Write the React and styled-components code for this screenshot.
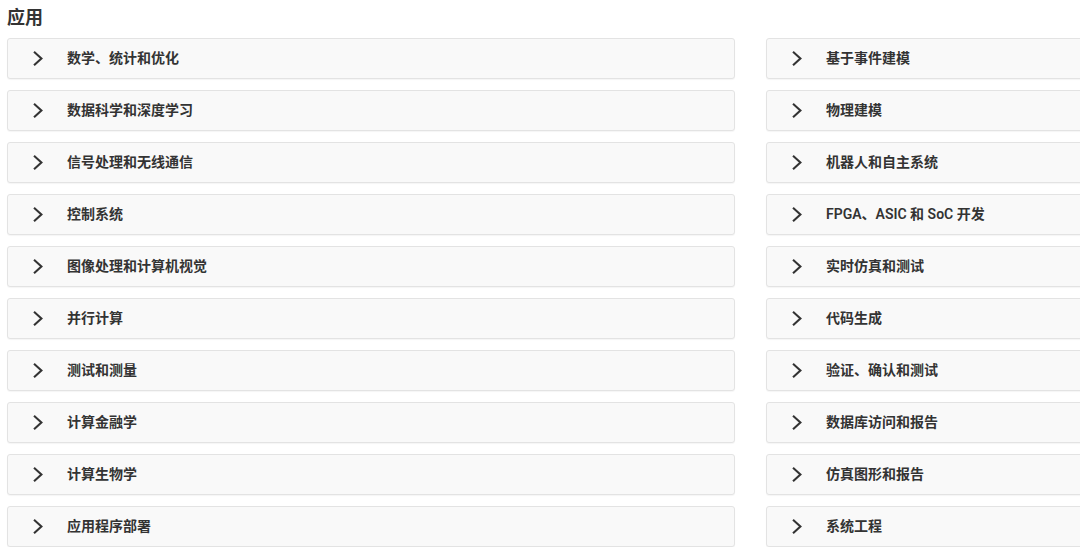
import React from "react";
import styled, { createGlobalStyle } from "styled-components";

const Global = createGlobalStyle`
  html, body { margin: 0; padding: 0; background: #fff; }
  body { font-family: Roboto, "Noto Sans CJK SC", sans-serif; overflow: hidden; }
  #root { width: 1080px; overflow: hidden; }
`;

const Page = styled.div`
  padding: 6px 0 0 7px;
  width: 1600px;
`;

const Title = styled.h2`
  margin: 0 0 9px 0;
  font-size: 18px;
  line-height: 23px;
  font-weight: 700;
  color: #333;
`;

const Grid = styled.div`
  display: grid;
  grid-template-columns: 728px 728px;
  column-gap: 31px;
  row-gap: 11px;
`;

const Card = styled.div`
  display: flex;
  align-items: center;
  height: 39px;
  background: #f9f9f9;
  border: 1px solid #e3e3e3;
  border-radius: 3px;
  box-shadow: 0 1px 1px rgba(0, 0, 0, 0.04);
`;

const Chevron = styled.span`
  display: flex;
  width: 12px;
  margin-left: 24px;
  margin-right: 23px;
  color: #333;
`;

const Label = styled.span`
  font-size: 14px;
  line-height: 18px;
  margin-bottom: 1px;
  font-weight: 600;
  color: #333;
  font-family: Roboto, "Noto Sans CJK SC", sans-serif;
`;

const left = [
  "数学、统计和优化",
  "数据科学和深度学习",
  "信号处理和无线通信",
  "控制系统",
  "图像处理和计算机视觉",
  "并行计算",
  "测试和测量",
  "计算金融学",
  "计算生物学",
  "应用程序部署",
];
const right = [
  "基于事件建模",
  "物理建模",
  "机器人和自主系统",
  "FPGA、ASIC 和 SoC 开发",
  "实时仿真和测试",
  "代码生成",
  "验证、确认和测试",
  "数据库访问和报告",
  "仿真图形和报告",
  "系统工程",
];

const Arrow = () => (
  <svg width="12" height="15" viewBox="0 0 12 15" fill="none">
    <path d="M2.8 1.5 L9.4 7.5 L2.8 13.5" stroke="currentColor" strokeWidth="2.1" strokeLinecap="square" />
  </svg>
);

export default function App() {
  const items = [];
  left.forEach((l, i) => {
    items.push(l, right[i]);
  });
  return (
    <>
      <Global />
      <Page>
        <Title>应用</Title>
        <Grid>
          {items.map((t, i) => (
            <Card key={i}>
              <Chevron>
                <Arrow />
              </Chevron>
              <Label>{t}</Label>
            </Card>
          ))}
        </Grid>
      </Page>
    </>
  );
}
